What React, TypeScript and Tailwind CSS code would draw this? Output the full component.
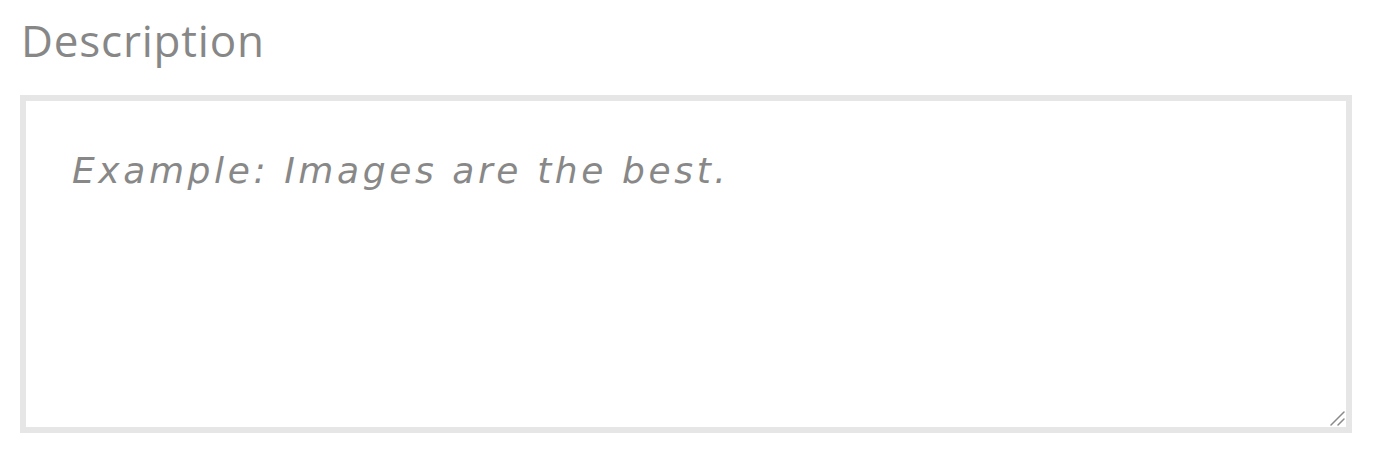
export default function App() {
  return (
    <main className="min-h-screen bg-white px-[20px] pt-[8px] font-['Open_Sans',sans-serif]">
      <label className="block text-[44px] leading-[64px] tracking-[0.8px] text-[#878787] pl-[1px]">
        Description
      </label>
      <div className="relative mt-[23px] w-[1332px]">
        <textarea
          placeholder="Example: Images are the best."
          className="block w-full h-[338px] border-[6px] border-[#e6e6e6] pl-[46px] pr-[45px] pt-[48px] pb-[44px] font-['DejaVu_Sans',sans-serif] text-[36px] leading-[44px] italic font-light tracking-[3.6px] text-[#555] placeholder:text-[#888] outline-none resize-none"
        />
        <svg className="absolute right-[7px] bottom-[7px]" width="16" height="16" viewBox="0 0 16 16">
          <path d="M2 15 L15 2 M9 15 L15 9" stroke="#8a8a8a" strokeWidth="1.5" strokeLinecap="round" />
        </svg>
      </div>
    </main>
  );
}
